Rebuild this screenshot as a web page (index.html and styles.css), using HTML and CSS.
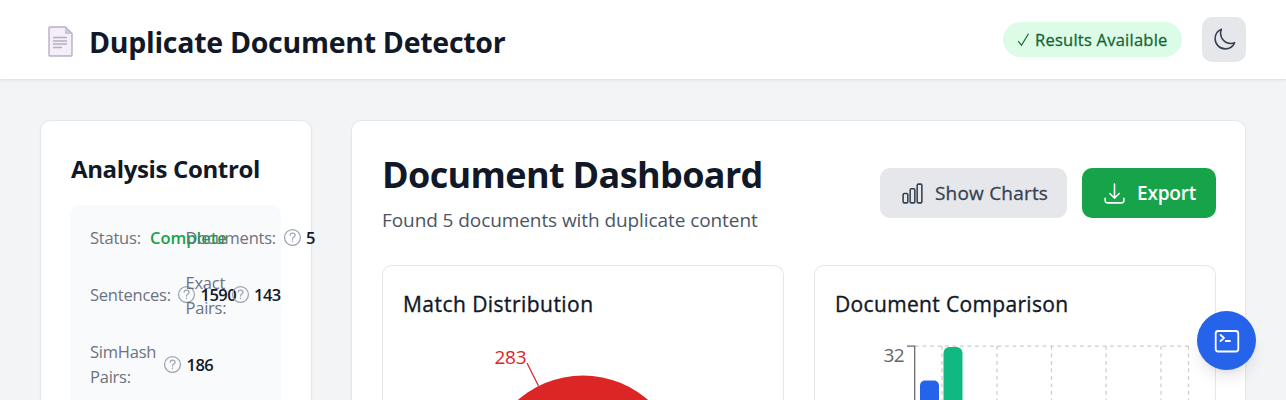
FILE: index.html
```html
<!DOCTYPE html>
<html lang="en">
<head>
<meta charset="utf-8">
<title>Duplicate Document Detector</title>
<link rel="stylesheet" href="styles.css">
</head>
<body>
<header class="header">
  <div class="brand">
    <svg class="brand-icon" width="26" height="32" viewBox="0 0 26 32"><path d="M2 1H17.500L24 7.500V29Q24 30 23 30H2Q1 30 1 29V2Q1 1 2 1Z" fill="#f3eef8" stroke="#b9b0c3" stroke-width="1.400"/><path d="M17 1.500L23.500 8H17Z" fill="#cdc4dc"/><path d="M5 11.500H19M5 15H19M5 18H19M5 21.500H14" stroke="#b8adc0" stroke-width="1.300"/></svg>
    <h1 class="title">Duplicate Document Detector</h1>
  </div>
  <div class="header-actions">
    <div class="badge"><svg width="13" height="16" viewBox="0 0 13 16"><path d="M1.200 9.200L4.500 13.300L11.500 1.800" fill="none" stroke="#166534" stroke-width="1.200"/></svg><span class="badge-text">Results Available</span></div>
    <button class="theme-toggle"><svg width="25" height="25" viewBox="0 0 24 24" fill="none" stroke="#374151" stroke-width="1.500" stroke-linecap="round" stroke-linejoin="round"><path d="M21.752 15.002A9.720 9.720 0 0 1 18 15.750c-5.385 0-9.750-4.365-9.750-9.750 0-1.330.266-2.597.748-3.752A9.753 9.753 0 0 0 3 11.250C3 16.635 7.365 21 12.750 21a9.753 9.753 0 0 0 9.002-5.998Z"/></svg></button>
  </div>
</header>
<main class="layout">
  <aside class="card sidebar">
    <h2 class="side-title">Analysis Control</h2>
    <div class="stats">
      <div class="stat"><span class="label status">Status:</span><span class="value complete">Complete</span></div>
      <div class="stat"><span class="label documents">Documents:</span><svg class="help" viewBox="0 0 18 18"><circle cx="9" cy="9" r="7.500"/><path d="M6.700 6.700Q7 4.900 9 4.900Q11.400 4.900 11.400 6.900Q11.400 8 10 8.800Q9 9.400 9 10.500M9 12.400V12.900"/></svg><span class="value">5</span></div>
      <div class="stat"><span class="label sentences">Sentences:</span><svg class="help" viewBox="0 0 18 18"><circle cx="9" cy="9" r="7.500"/><path d="M6.700 6.700Q7 4.900 9 4.900Q11.400 4.900 11.400 6.900Q11.400 8 10 8.800Q9 9.400 9 10.500M9 12.400V12.900"/></svg><span class="value">1590</span></div>
      <div class="stat"><span class="label exact">Exact<br>Pairs:</span><svg class="help" viewBox="0 0 18 18"><circle cx="9" cy="9" r="7.500"/><path d="M6.700 6.700Q7 4.900 9 4.900Q11.400 4.900 11.400 6.900Q11.400 8 10 8.800Q9 9.400 9 10.500M9 12.400V12.900"/></svg><span class="value">143</span></div>
      <div class="stat"><span class="label simhash">SimHash<br>Pairs:</span><svg class="help" viewBox="0 0 18 18"><circle cx="9" cy="9" r="7.500"/><path d="M6.700 6.700Q7 4.900 9 4.900Q11.400 4.900 11.400 6.900Q11.400 8 10 8.800Q9 9.400 9 10.500M9 12.400V12.900"/></svg><span class="value">186</span></div>
    </div>
  </aside>
  <section class="card dashboard">
    <div class="dash-head">
      <div>
        <h2 class="dash-title">Document Dashboard</h2>
        <p class="subtitle">Found 5 documents with duplicate content</p>
      </div>
      <div class="buttons">
        <button class="btn btn-charts"><svg width="25" height="25" viewBox="0 0 24 24" fill="none" stroke="#374151" stroke-width="1.500" stroke-linejoin="round"><path d="M3 13.125C3 12.504 3.504 12 4.125 12h2.250c.621 0 1.125.504 1.125 1.125v6.750C7.500 20.496 6.996 21 6.375 21h-2.250A1.125 1.125 0 0 1 3 19.875v-6.750ZM9.750 8.625c0-.621.504-1.125 1.125-1.125h2.250c.621 0 1.125.504 1.125 1.125v11.250c0 .621-.504 1.125-1.125 1.125h-2.250a1.125 1.125 0 0 1-1.125-1.125V8.625ZM16.500 4.125c0-.621.504-1.125 1.125-1.125h2.250C20.496 3 21 3.504 21 4.125v15.750c0 .621-.504 1.125-1.125 1.125h-2.250a1.125 1.125 0 0 1-1.125-1.125V4.125Z"/></svg><span>Show Charts</span></button>
        <button class="btn btn-export"><svg width="25" height="25" viewBox="0 0 24 24" fill="none" stroke="#fff" stroke-width="1.500" stroke-linecap="round" stroke-linejoin="round"><path d="M3 16.500v2.250A2.250 2.250 0 0 0 5.250 21h13.500A2.250 2.250 0 0 0 21 18.750V16.500M16.500 12 12 16.500m0 0L7.500 12m4.500 4.500V3"/></svg><span>Export</span></button>
      </div>
    </div>
    <div class="charts">
      <div class="chart-card">
        <h3 class="chart-title match">Match Distribution</h3>
        <svg class="chart" width="360" height="65" viewBox="403 335 360 65">
          <circle cx="583" cy="474.500" r="99" fill="#dc2626"/>
          <path d="M527 363L538.500 386" stroke="#dc2626" stroke-width="1.200"/>
          <text class="pie-label" x="494.500" y="364" textLength="32">283</text>
        </svg>
      </div>
      <div class="chart-card">
        <h3 class="chart-title comparison">Document Comparison</h3>
        <svg class="chart" width="360" height="65" viewBox="835 335 360 65">
          <path d="M915 346H1188.500M942 346V600M997 346V600M1051.500 346V600M1106 346V600M1161 346V600M1188.500 346V600" fill="none" stroke="#ccc" stroke-width="1.250" stroke-dasharray="3.750 3.750"/>
          <path d="M907 346H914.700V600" fill="none" stroke="#666" stroke-width="1.250"/>
          <rect x="920" y="380.500" width="19" height="200" rx="5" fill="#2563eb"/>
          <rect x="943.500" y="347" width="19" height="200" rx="6" fill="#10b981"/>
          <text class="axis-label" x="883.500" y="362" textLength="21">32</text>
        </svg>
      </div>
    </div>
  </section>
</main>
<button class="fab"><svg width="30" height="30" viewBox="0 0 30 30" fill="none" stroke="#fff" stroke-width="1.800" stroke-linecap="round" stroke-linejoin="round"><rect x="3.700" y="5" width="22.600" height="20.500" rx="2.500"/><path d="M8.500 9L12 12L8.500 15M13.700 15H18"/></svg></button>
</body>
</html>
```
FILE: styles.css
```css
* { box-sizing: border-box; }
body { display: flex; flex-direction: column; margin: 0; height: 400px; overflow: hidden; background: #f3f4f6; color: #111827; font-family: "Open Sans", "Noto Sans", sans-serif; }
h1, h2, h3, p { margin: 0; white-space: nowrap; }
svg { flex: none; display: block; }
button { border: 0; padding: 0; font-family: inherit; }
.header { display: flex; flex: none; justify-content: space-between; height: 79px; padding: 0 40px 0 48px; background: #fff; box-shadow: 0 1px 3px rgba(0,0,0,.1); z-index: 1; }
.brand { display: flex; align-items: center; gap: 15px; padding-top: 4px; }
.title { font-size: 28.500px; line-height: 40px; font-weight: 700; letter-spacing: -.28px; }
.header-actions { display: flex; align-items: center; gap: 20px; }
.badge { display: flex; align-items: center; gap: 5px; height: 35px; width: 179px; padding-left: 14px; border-radius: 18px; background: #dcfce7; color: #166534; }
.badge-text { font-size: 16.500px; letter-spacing: .24px; -webkit-text-stroke: .3px; white-space: nowrap; }
.theme-toggle { display: flex; align-items: center; justify-content: center; width: 44px; height: 45px; border-radius: 10px; background: #e5e7eb; }
.layout { display: grid; flex: 1; min-height: 0; grid-template-columns: 272px 895px; grid-template-rows: 1fr; gap: 39px; padding: 41px 40px 0; }
.card { min-height: 0; border: 1px solid #e5e7eb; border-bottom: 0; border-radius: 10px 10px 0 0; background: #fff; box-shadow: 0 1px 2px rgba(0,0,0,.05); }
.sidebar { display: flex; flex-direction: column; padding: 28px 29px 0; }
.side-title { padding-left: 1px; font-size: 24px; line-height: 40px; font-weight: 700; letter-spacing: -.36px; }
.stats { display: grid; flex: 1; grid-template-columns: 75.500px 75.500px; gap: 19.500px 20px; width: 211px; align-content: start; margin-top: 16px; padding: 20px 20px 0; border-radius: 10px 10px 0 0; background: #f9fafb; }
.stat { display: flex; align-items: center; white-space: nowrap; font-size: 16.500px; line-height: 25px; }
.label { flex: none; color: #6b7280; letter-spacing: -.22px; }
.status { width: 60px; }
.documents { width: 97px; }
.sentences { width: 87px; }
.exact { width: 45px; }
.simhash { width: 73px; }
.value { font-weight: 600; letter-spacing: -.5px; }
.complete { color: #16a34a; letter-spacing: 0; }
.help { width: 19px; height: 19px; margin-right: 4.500px; fill: none; stroke: #9ca3af; stroke-width: 1.200; stroke-linecap: round; }
.dashboard { display: flex; flex-direction: column; padding: 29px 29px 0 30px; }
.dash-head { display: flex; flex: none; justify-content: space-between; height: 115px; }
.dash-title { font-size: 36px; line-height: 50px; font-weight: 700; letter-spacing: -.640px; }
.subtitle { margin-top: 7px; font-size: 19px; line-height: 26px; letter-spacing: -.08px; color: #4b5563; }
.buttons { display: flex; gap: 15px; padding-top: 18px; }
.btn { display: flex; align-items: center; height: 50px; padding-left: 20px; gap: 10px; border-radius: 10px; font-size: 19px; white-space: nowrap; }
.btn-charts { width: 187px; background: #e5e7eb; color: #374151; letter-spacing: .2px; -webkit-text-stroke: .3px; }
.btn-export { width: 134px; background: #16a34a; color: #fff; font-weight: 600; letter-spacing: -.2px; }
.charts { display: grid; flex: 1; grid-template-columns: 402px 402px; gap: 30px; }
.chart-card { padding: 20px 20px 0; border: 1px solid #e5e7eb; border-bottom: 0; border-radius: 10px 10px 0 0; }
.chart-title { padding-top: 1px; font-size: 21px; line-height: 35px; font-weight: 400; -webkit-text-stroke: .35px; }
.match { letter-spacing: .45px; }
.comparison { letter-spacing: .34px; }
.chart { margin-top: 13px; }
.pie-label { font-size: 19px; fill: #dc2626; }
.axis-label { font-size: 19px; fill: #666; }
.fab { position: fixed; z-index: 2; right: 30px; bottom: 30px; display: flex; align-items: center; justify-content: center; width: 59px; height: 59px; border-radius: 50%; background: #2563eb; box-shadow: 0 10px 15px -3px rgba(0,0,0,.1), 0 4px 6px -2px rgba(0,0,0,.05); }
```
